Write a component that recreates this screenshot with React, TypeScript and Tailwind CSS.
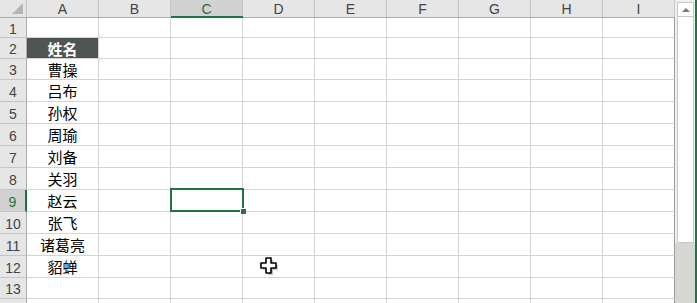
import { FC } from "react";

const cols = ["A", "B", "C", "D", "E", "F", "G", "H", "I"];
const names = ["", "姓名", "曹操", "吕布", "孙权", "周瑜", "刘备", "关羽", "赵云", "张飞", "诸葛亮", "貂蝉", "", ""];
const heights = ["h-[20px]", "h-[21px]", "h-[21px]", "h-[22px]", "h-[22px]", "h-[22px]", "h-[22px]", "h-[22px]", "h-[22px]", "h-[22px]", "h-[22px]", "h-[22px]", "h-[21px]", "h-[22px]"];

const font = { fontFamily: '"Noto Sans CJK SC", "Liberation Sans", sans-serif' };

const Cursor: FC = () => (
  <svg className="absolute left-[260px] top-[256px]" width="20" height="20" viewBox="0 0 20 20">
    <path d="M6 2h5v5h5v5h-5v5H6v-5H1V7h5z" fill="#666" opacity="0.4" transform="translate(2 2)" />
    <path d="M6 2h5v5h5v5h-5v5H6v-5H1V7h5z" fill="#fff" stroke="#000" strokeWidth="1.6" strokeLinejoin="round" />
  </svg>
);

const App: FC = () => {
  return (
    <div className="w-[697px] h-[303px] overflow-hidden bg-white flex relative text-[14px]" style={font}>
      <div className="w-[675px] flex flex-col">
        {/* column headers */}
        <div className="flex h-[18px] bg-[#e6e6e6] border-b border-[#ababab] shrink-0">
          <div className="w-[27px] border-r border-[#c6c6c6] relative">
            <div className="absolute right-[3px] bottom-[3px] w-0 h-0 border-l-[11px] border-l-transparent border-b-[11px] border-b-[#b5b5b5]" />
          </div>
          {cols.map((c) => (
            <div
              key={c}
              className={
                c === "C"
                  ? "w-[72px] border-r border-[#c6c6c6] bg-[#d2d2d2] text-[#217346] flex items-center justify-center relative"
                  : "w-[72px] border-r border-[#c6c6c6] text-[#444] flex items-center justify-center"
              }
            >
              <span className="leading-none" style={{ fontFamily: '"Liberation Sans", sans-serif' }}>{c}</span>
              {c === "C" && <div className="absolute left-0 right-[-1px] bottom-[-1px] h-[2px] bg-[#217346]" />}
            </div>
          ))}
        </div>
        {/* rows */}
        {names.map((n, i) => (
          <div key={i} className={`flex shrink-0 ${heights[i]}`}>
            <div
              className={
                i === 8
                  ? "w-[27px] bg-[#d2d2d2] border-r-2 border-[#217346] border-b border-b-[#c6c6c6] text-[#217346] flex items-center justify-center"
                  : "w-[27px] bg-[#e6e6e6] border-r border-[#ababab] border-b border-b-[#c6c6c6] text-[#444] flex items-center justify-center"
              }
            >
              <span className="leading-none pt-[2px]" style={{ fontFamily: '"Liberation Sans", sans-serif' }}>{i + 1}</span>
            </div>
            {cols.map((c) => (
              <div
                key={c}
                className={
                  c === "A" && i === 1
                    ? "w-[72px] bg-[#4f5552] text-white font-bold border-r border-b border-[#d4d4d4] flex items-center justify-center"
                    : c === "I"
                    ? "w-[72px] border-r border-r-[#9a9a9a] border-b border-b-[#d4d4d4] relative"
                    : "w-[72px] border-r border-b border-[#d4d4d4] text-black flex items-center justify-center relative"
                }
              >
                {c === "A" && <span className="leading-none text-[15px]">{n}</span>}
                {c === "C" && i === 8 && (
                  <div className="absolute z-10 left-[-1px] top-[-2px] w-[74px] h-[24px] border-2 border-[#217346]">
                    <div className="absolute right-[-4px] bottom-[-4px] w-[6px] h-[6px] bg-[#217346] border-l border-t border-white" />
                  </div>
                )}
              </div>
            ))}
          </div>
        ))}
      </div>
      {/* scrollbar */}
      <div className="w-[20px] bg-[#f0f0f0] flex flex-col pl-[2px] pr-[1px] pt-[2px]">
        <div className="h-[15px] bg-white border border-[#c8c8c8] flex items-center justify-center shrink-0">
          <div className="w-0 h-0 border-l-[4px] border-r-[4px] border-b-[4px] border-l-transparent border-r-transparent border-b-[#777]" />
        </div>
        <div className="h-[226px] bg-white border border-[#c8c8c8] border-t-0 shrink-0" />
        <div className="flex-1 bg-[#d7d7d1] -mx-[2px]" />
      </div>
      <div className="w-[2px] bg-[#217346]" />
      <Cursor />
    </div>
  );
};

export default App;
